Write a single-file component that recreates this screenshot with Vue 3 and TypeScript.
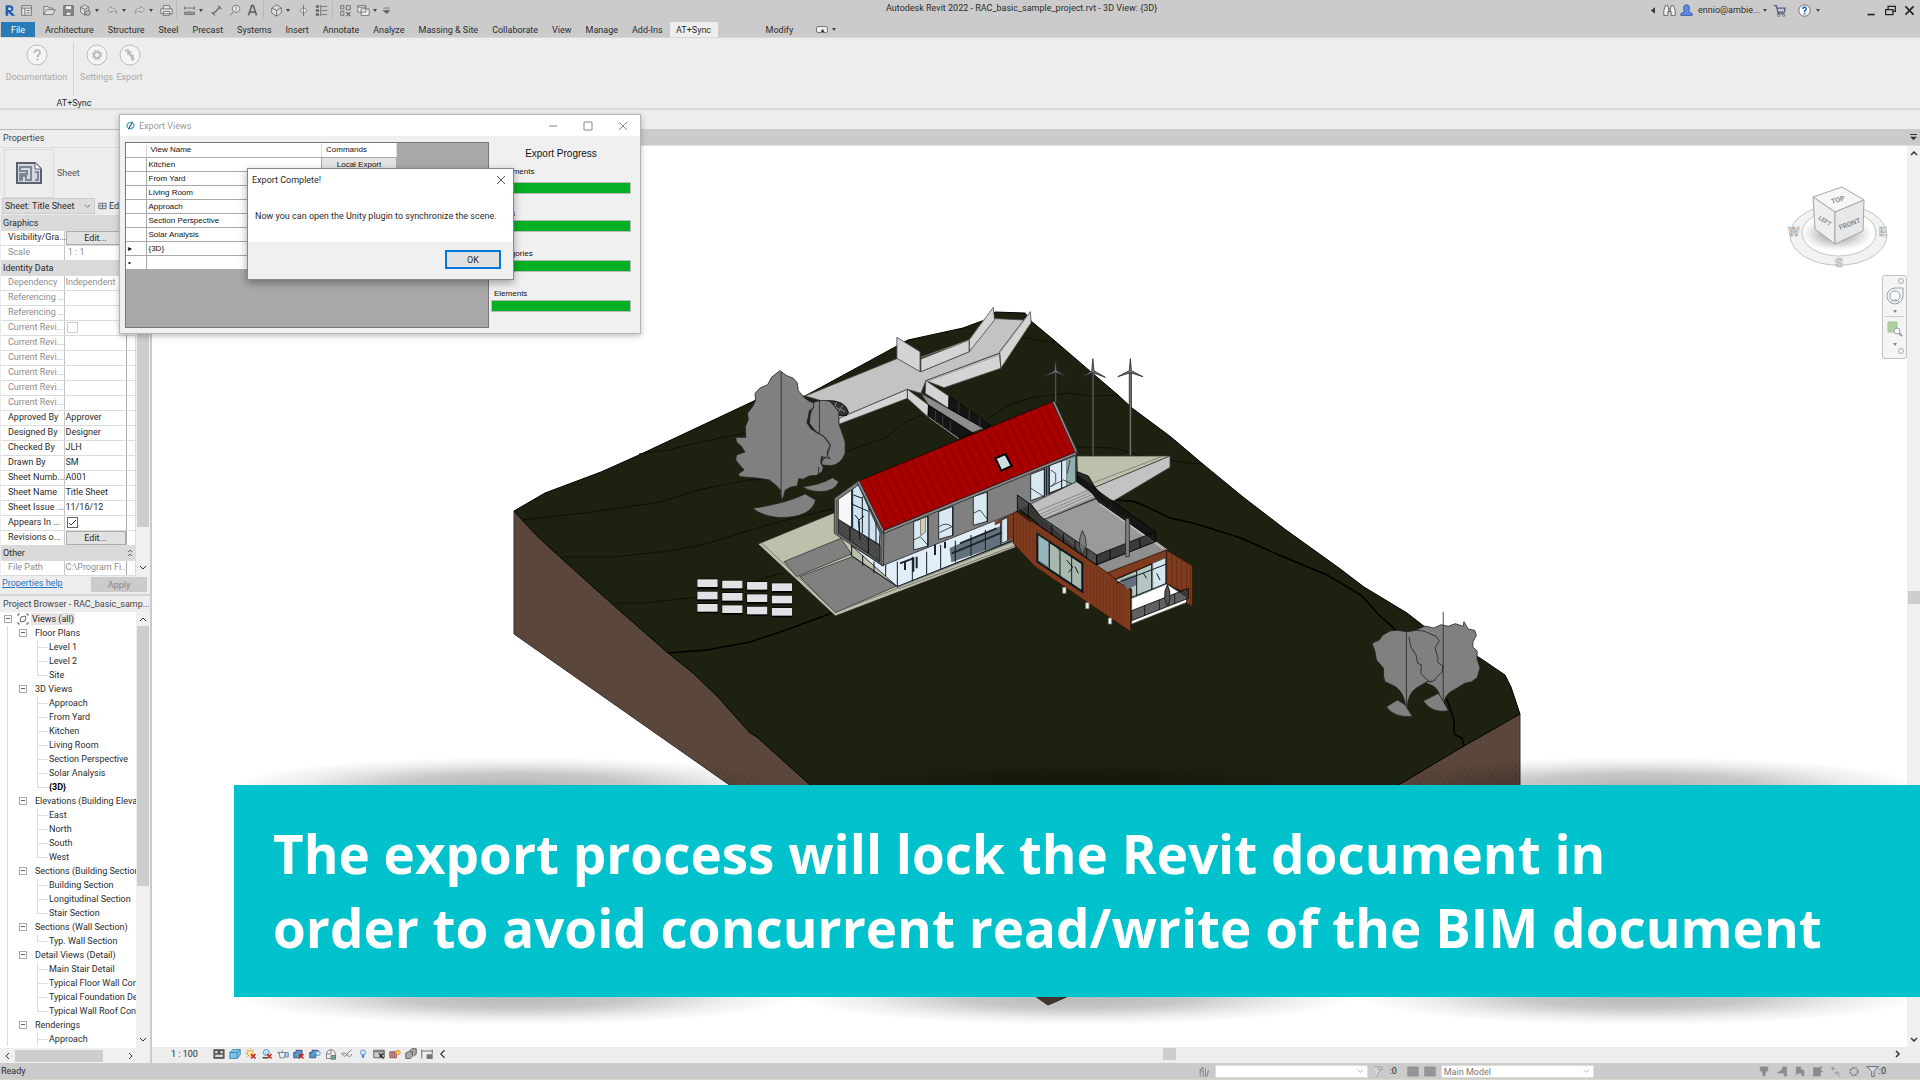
<script setup lang="ts">
import { ref } from 'vue'

interface Tool { icon: string; menu?: boolean; sep?: boolean; w?: number }
interface Prop { kind: 'head' | 'row'; name: string; value?: string; type?: 'edit' | 'check' | 'text'; on?: boolean; dim?: boolean }
interface Node { level: number; name: string; last?: boolean; bold?: boolean }

const icons: Record<string, string> = {
  logo: '<path d="M3 2v12h3v-4l4 4h4l-5-5c4 0 4-7-1-7z" fill="#1f5fae"/><path d="M6 4.500h2c2 0 2 3 0 3H6z" fill="#cbe0f5"/>',
  home: '<path d="M2 2h12v12H2zM2 5h12M6 5v9M8 8h4M8 11h4" fill="#e2e2e2"/>',
  open: '<path d="M1 13V3h5l1 2h5v2M1 13l3-6h11l-3 6z" fill="#dedede"/>',
  save: '<path d="M2 2h12v12H2z" fill="#8a8a8a"/><path d="M4 2h8v5H4zM5 10h6v4H5z" fill="#eee"/>',
  sync: '<path d="M7 1l5 3v6l-5 4-5-4V4zM2 4l5 3 5-3M7 7v7" fill="#ddd"/><circle cx="11" cy="11" r="3" fill="#bbb"/>',
  undo: '<path d="M6 3L2 7l4 4V9c4-1 6 0 7 3 1-5-2-7-7-7z" fill="#d8d8d8" stroke="#8a8a8a"/>',
  redo: '<path d="M10 3l4 4-4 4V9c-4-1-6 0-7 3-1-5 2-7 7-7z" fill="#d8d8d8" stroke="#8a8a8a"/>',
  print: '<path d="M4 6V2h8v4M1 6h14v6H1zM4 9h8v5H4z" fill="#e6e6e6"/>',
  dims: '<path d="M2 5h12M2 3v4M14 3v4M2 10h12v3H2z" fill="#999"/>',
  line: '<path d="M4 12l8-8M2 10l4 4M10 2l4 4" stroke-width="1.500"/>',
  tag: '<circle cx="10" cy="6" r="4.500" fill="#eee"/><path d="M10 3v6M3 14l4-5"/>',
  text: '<path d="M3 14L7 2h2l4 12M5 10h6" stroke-width="2"/>',
  cube: '<path d="M8 1l6 4v6l-6 4-6-4V5zM2 5l6 3 6-3M8 8v7" fill="#ddd"/>',
  section: '<path d="M8 1v14M4 8l4-4 4 4-4 4z" fill="#eee"/>',
  list: '<path d="M1 3h4M1 8h4M1 13h4" stroke-width="3"/><path d="M8 3h7M8 8h7M8 13h7M7 1v14"/>',
  closeviews: '<path d="M2 2h4v4H2zM9 2h5v5H9zM2 9h4v5H2z"/><path d="M9 10l5 5M14 10l-5 5" stroke-width="1.500"/>',
  switchviews: '<path d="M1 2h10v8H1zM5 6h10v8H5zM1 4h10" fill="#eee"/>',
  custom: '<path d="M4 5h8M4 8h8l-4 4z" fill="#666"/>',
  back: '<path d="M11 4v8L6 8z" fill="#333" stroke="none"/>',
  binoc: '<path d="M1 14V8l2-6h3l1 4h2l1-4h3l2 6v6h-5V9H6v5zM7 6v4M9 6v4" fill="#eee" stroke="#555"/>',
  user: '<path d="M8 1c5 0 4 7 2 8l5 3v2H1v-2l5-3C4 8 3 1 8 1z" fill="#5b88e8" stroke="#2d4f9c"/>',
  cart: '<path d="M1 2h3l2 8h8l1-5H5M6 10v2h8" fill="none" stroke="#4d5b86" stroke-width="1.500"/><circle cx="7" cy="14" r="1.500"/><circle cx="13" cy="14" r="1.500"/>',
  help: '<circle cx="8" cy="8" r="7" fill="#fff" stroke="#555"/><path d="M6 6c0-3 4-3 4 0 0 2-2 1-2 4M8 11v2" stroke="#2a62c8" stroke-width="2" fill="none"/>',
  min: '<path d="M3 13h9" stroke="#222" stroke-width="2"/>',
  restore: '<path d="M5 6V3h9v6h-3M2 7h9v6H2z" fill="none" stroke="#222" stroke-width="1.500"/>',
  close: '<path d="M3 3l10 10M13 3L3 13" stroke="#222" stroke-width="2"/>',
  detail: '<path d="M1 2h14v12H1z" fill="#555"/><path d="M3 4h3v3H3zM10 4h3v3h-3zM3 9h10v3H3z" fill="#ddd" stroke="none"/>',
  style: '<path d="M1 6l4-4h10v7l-4 5H1zM1 6h10v8M11 6l4-4" fill="#7cc3e6" stroke="#2a7ba8"/>',
  sun: '<circle cx="7" cy="7" r="4" fill="#ffe9a8" stroke="#d59a1a"/><path d="M7 0v2M0 7h2M2 2l2 2M12 2l-2 2M2 12l2-2" stroke="#d59a1a"/><path d="M8 8l6 6M14 8l-6 6" stroke="#c7221f" stroke-width="2"/>',
  shadow: '<circle cx="7" cy="6" r="4" fill="#bfe0f5" stroke="#3b82ad"/><path d="M2 13h6" stroke="#444" stroke-width="2"/><path d="M8 8l6 6M14 8l-6 6" stroke="#c7221f" stroke-width="2"/>',
  render: '<path d="M3 6h8l-1 7H4zM3 8C0 6 1 4 3 6M7 3v3" fill="#eee"/><path d="M11 6h4v6h-4z" fill="#a8d2f2" stroke="#3b82c8"/>',
  crop: '<path d="M1 12V6h3V3h8v6h-3v4H1z" fill="#5a9ac8" stroke="#336"/><path d="M8 8l6 6M14 8l-6 6" stroke="#c7221f" stroke-width="2"/>',
  cropshow: '<path d="M1 12V6h3V3h8v6h-3v4H1z" fill="#5a9ac8" stroke="#336"/><circle cx="12" cy="7" r="3" fill="#d5ecff" stroke="#3b82c8"/>',
  lock: '<path d="M2 9c0-9 12-9 12 0v5H2zM2 8h6V2" fill="#eee"/><path d="M8 10h6v5H8z" fill="#6fa59a"/>',
  glasses: '<path d="M1 7c2 5 6 5 7 1l6-6M8 8c1 5 6 4 6 0M1 7h6"/>',
  bulb: '<circle cx="8" cy="6" r="3.500" fill="#cfe8ff" stroke="#3b82c8"/><path d="M8 9v4" stroke="#3b82c8" stroke-width="3"/>',
  temp: '<path d="M1 3h14v10H1zM1 5h14" stroke="#444" fill="#ccc"/><path d="M8 7l6 7M9 12l5-5" stroke="#333" stroke-width="2"/>',
  analysis: '<path d="M1 13V5h9v8zM4 5v8M7 5v8" fill="#c99" stroke="#844"/><circle cx="12" cy="6" r="3" fill="#ffcf66" stroke="#d58a1a"/>',
  displace: '<path d="M1 7l3-2h6v6l-3 3H1zM6 4l3-3h6v7l-3 3" fill="#aaa" stroke="#444"/>',
  reveal: '<path d="M1 2v12M15 2v6M1 4h14" stroke="#444"/><path d="M8 9h7v5H8z" fill="#777"/>',
  chev: '<path d="M10 3L5 8l5 5" stroke="#333" stroke-width="1.500" fill="none"/>',
  worker: '<path d="M3 15V7h4v8M5 2v3M10 4v11M14 6l-2 9M2 6l6-3" stroke-width="1.500"/>',
  clip: '<path d="M2 2h9l2 3-5 3-3 7M5 5h6" fill="#ddd"/>',
  block: '<path d="M1 2h14v12H1z" fill="#969696"/>',
  blockcut: '<path d="M1 2h14v12h-5L6 9l4 5H1z" fill="#969696"/>',
  sel1: '<path d="M3 2h10v5l-3 1-1 6H7L6 8 3 7z" fill="#8b8b8b"/>',
  sel2: '<path d="M9 2h5v12h-3v-4H2l7-5z" fill="#8b8b8b"/>',
  sel3: '<path d="M3 2h6v4h4v8h-2l-1-4H6l-3 2z" fill="#8b8b8b"/>',
  sel4: '<path d="M2 3h8l3-2-2 5 3 2-3 1v5H2z" fill="#8b8b8b"/>',
  sel5: '<path d="M4 1v6M1 4h6M9 7v6M6 10h7M12 12v3"/>',
  gear: '<circle cx="8" cy="8" r="5" stroke-width="2.500" stroke-dasharray="3 1"/>',
  funnel: '<path d="M1 2h14l-5 6v6H7V8z" fill="#d3dee8" stroke="#555"/>',
}

const quick: Tool[] = [
  { icon: 'home', w: 23 }, { icon: 'open', w: 19 }, { icon: 'save', w: 17 }, { icon: 'sync', menu: true, w: 27 },
  { icon: 'undo', menu: true, w: 27 }, { icon: 'redo', menu: true, w: 27 }, { icon: 'print', w: 17, sep: true },
  { icon: 'dims', menu: true, w: 27 }, { icon: 'line', w: 18 }, { icon: 'tag', w: 18 }, { icon: 'text', w: 18, sep: true },
  { icon: 'cube', menu: true, w: 27 }, { icon: 'section', w: 18 }, { icon: 'list', w: 18, sep: true },
  { icon: 'closeviews', w: 18 }, { icon: 'switchviews', menu: true, w: 23 }, { icon: 'custom', w: 14 },
]
const tabs = ['Architecture', 'Structure', 'Steel', 'Precast', 'Systems', 'Insert', 'Annotate', 'Analyze', 'Massing & Site', 'Collaborate', 'View', 'Manage', 'Add-Ins']
const viewTools = ['detail', 'style', 'sun', 'shadow', 'render', 'crop', 'cropshow', 'lock', 'glasses', 'bulb', 'temp', 'analysis', 'displace', 'reveal', 'chev']
const statusTools = ['sel1', 'sel2', 'sel3', 'sel4', 'sel5', 'gear']

const props: Prop[] = [
  { kind: 'head', name: 'Graphics' },
  { kind: 'row', name: 'Visibility/Gra...', type: 'edit' },
  { kind: 'row', name: 'Scale', value: ' 1 : 1', dim: true },
  { kind: 'head', name: 'Identity Data' },
  { kind: 'row', name: 'Dependency', value: 'Independent', dim: true },
  { kind: 'row', name: 'Referencing ...', dim: true },
  { kind: 'row', name: 'Referencing ...', dim: true },
  { kind: 'row', name: 'Current Revi...', type: 'check', dim: true },
  { kind: 'row', name: 'Current Revi...', dim: true },
  { kind: 'row', name: 'Current Revi...', dim: true },
  { kind: 'row', name: 'Current Revi...', dim: true },
  { kind: 'row', name: 'Current Revi...', dim: true },
  { kind: 'row', name: 'Current Revi...', dim: true },
  { kind: 'row', name: 'Approved By', value: 'Approver' },
  { kind: 'row', name: 'Designed By', value: 'Designer' },
  { kind: 'row', name: 'Checked By', value: 'JLH' },
  { kind: 'row', name: 'Drawn By', value: 'SM' },
  { kind: 'row', name: 'Sheet Numb...', value: 'A001' },
  { kind: 'row', name: 'Sheet Name', value: 'Title Sheet' },
  { kind: 'row', name: 'Sheet Issue ...', value: '11/16/12' },
  { kind: 'row', name: 'Appears In ...', type: 'check', on: true },
  { kind: 'row', name: 'Revisions o...', type: 'edit' },
  { kind: 'head', name: 'Other' },
  { kind: 'row', name: 'File Path', value: 'C:\\Program Fi...', dim: true },
]

const tree: Node[] = [
  { level: 1, name: 'Floor Plans' }, { level: 2, name: 'Level 1' }, { level: 2, name: 'Level 2' }, { level: 2, name: 'Site', last: true },
  { level: 1, name: '3D Views' }, { level: 2, name: 'Approach' }, { level: 2, name: 'From Yard' }, { level: 2, name: 'Kitchen' },
  { level: 2, name: 'Living Room' }, { level: 2, name: 'Section Perspective' }, { level: 2, name: 'Solar Analysis' }, { level: 2, name: '{3D}', last: true, bold: true },
  { level: 1, name: 'Elevations (Building Elevation)' }, { level: 2, name: 'East' }, { level: 2, name: 'North' }, { level: 2, name: 'South' }, { level: 2, name: 'West', last: true },
  { level: 1, name: 'Sections (Building Section)' }, { level: 2, name: 'Building Section' }, { level: 2, name: 'Longitudinal Section' }, { level: 2, name: 'Stair Section', last: true },
  { level: 1, name: 'Sections (Wall Section)' }, { level: 2, name: 'Typ. Wall Section', last: true },
  { level: 1, name: 'Detail Views (Detail)' }, { level: 2, name: 'Main Stair Detail' }, { level: 2, name: 'Typical Floor Wall Connection' },
  { level: 2, name: 'Typical Foundation Detail' }, { level: 2, name: 'Typical Wall Roof Connection', last: true },
  { level: 1, name: 'Renderings' }, { level: 2, name: 'Approach' },
]

const views = ['Kitchen', 'From Yard', 'Living Room', 'Approach', 'Section Perspective', 'Solar Analysis', '{3D}', '']
const steps = ['Documents', 'Views', 'Categories', 'Elements']
const messageOpen = ref(true)

const seams = Array.from({ length: 25 }, (_, i) => {
  const t = (i + 1) / 26
  return `M${178 + 579 * t} ${302 - 237 * t}L${250 + 582 * t} ${452 - 237 * t}`
}).join('')
const cladding = Array.from({ length: 33 }, (_, i) => {
  const x = 650 + i * 10
  return `M${x} ${402 + (x - 650) * 0.68}V${490 + (x - 640) * 0.76}`
}).join('')
const panels = [0, 1, 2, 3].flatMap(c => [0, 1, 2].map(r => ({ x: 468 + c * 59, y: 866 + c * 4 + r * 37 })))
</script>

<template>
  <div class="app">
    <header class="titlebar">
      <svg class="logo" viewBox="0 0 16 16" v-html="icons.logo" />
      <div class="quick">
        <button v-for="t in quick" :key="t.icon" type="button" class="tool" :class="{ sep: t.sep }" :style="{ width: t.w + 'px' }" :aria-label="t.icon">
          <svg class="ic" viewBox="0 0 16 16" v-html="icons[t.icon]" />
          <i v-if="t.menu" class="caret" />
        </button>
      </div>
      <div class="doc-title">Autodesk Revit 2022 - RAC_basic_sample_project.rvt - 3D View: {3D}</div>
      <div class="account">
        <svg class="ic" viewBox="0 0 16 16" v-html="icons.back" />
        <svg class="ic" viewBox="0 0 16 16" v-html="icons.binoc" />
        <svg class="ic" viewBox="0 0 16 16" v-html="icons.user" />
        <span class="mail">ennio@ambie...</span><i class="caret" />
        <svg class="ic cart" viewBox="0 0 16 16" v-html="icons.cart" />
        <svg class="ic" viewBox="0 0 16 16" v-html="icons.help" /><i class="caret" />
      </div>
      <div class="winbtns">
        <button type="button" aria-label="Minimize"><svg class="ic" viewBox="0 0 16 16" v-html="icons.min" /></button>
        <button type="button" aria-label="Restore"><svg class="ic" viewBox="0 0 16 16" v-html="icons.restore" /></button>
        <button type="button" aria-label="Close"><svg class="ic" viewBox="0 0 16 16" v-html="icons.close" /></button>
      </div>
    </header>

    <nav class="tabs">
      <button type="button" class="file">File</button>
      <button v-for="t in tabs" :key="t" type="button" class="tab">{{ t }}</button>
      <button type="button" class="tab active">AT+Sync</button>
      <button type="button" class="tab modify">Modify</button>
      <span class="collapse"><b>▴</b></span><i class="caret" />
    </nav>

    <section class="ribbon">
      <div class="panel">
        <div class="cmds">
          <button type="button" class="cmd doc">
            <svg viewBox="0 0 22 22"><circle cx="11" cy="11" r="10" /><path d="M8.500 9c0-4 5.500-4 5.500-.500 0 2-2.500 2-2.500 4.500M11.500 14.500v2" stroke-width="2" /></svg>
            <span>Documentation</span>
          </button>
          <button type="button" class="cmd">
            <svg viewBox="0 0 22 22"><circle cx="11" cy="11" r="10" /><circle cx="11" cy="11" r="3" stroke-width="2" /><circle cx="11" cy="11" r="4.500" stroke-dasharray="2 1.500" stroke-width="1.500" /></svg>
            <span>Settings</span>
          </button>
          <button type="button" class="cmd">
            <svg viewBox="0 0 22 22"><circle cx="11" cy="11" r="10" /><path d="M6 7l3-1 1 4 5 5M8 9l6 3-1 3M12 7l-2 3M15 16l-3-1" stroke-width="2" /></svg>
            <span>Export</span>
          </button>
        </div>
        <div class="panel-name">AT+Sync</div>
      </div>
    </section>
    <div class="options" />

    <main class="work">
      <aside class="side">
        <section class="properties">
          <h2>Properties</h2>
          <div class="type">
            <span class="thumb">
              <svg viewBox="0 0 26 22"><path d="M1 1h18l6 6v14H1z" fill="#d5d9df" stroke="#5a626e" stroke-width="2" /><path d="M19 1v6h6" fill="#fff" stroke="#5a626e" /><path d="M4 5h11v13H10v-4H6v4H4v-6h7V9H4zM19 10h3v8h-3" fill="none" stroke="#7d8795" stroke-width="2" /></svg>
            </span>
            <span>Sheet</span>
          </div>
          <div class="pick">
            <label class="sel">
              <select aria-label="Sheet type"><option>Sheet: Title Sheet</option></select>
              <svg class="down" viewBox="0 0 8 8"><path d="M1 2l3 3 3-3" /></svg>
            </label>
            <button type="button" class="edit-type"><svg viewBox="0 0 10 8"><path d="M1 1h8v6H1zM5 1v6M1 4h8" fill="#dfe9f2" stroke="#667" /></svg>Edit Type</button>
          </div>
          <div class="grid-wrap">
            <table class="grid">
              <colgroup><col class="ck"><col class="cv"><col></colgroup>
              <tbody>
                <tr v-for="(p, i) in props" :key="i" :class="{ dim: p.dim }">
                  <th v-if="p.kind === 'head'" colspan="3" scope="colgroup">{{ p.name }}<svg class="fold" viewBox="0 0 6 8"><path d="M1 3l2-2 2 2M1 7l2-2 2 2" /></svg></th>
                  <template v-else>
                    <td class="k">{{ p.name }}</td>
                    <td class="v">
                      <button v-if="p.type === 'edit'" type="button" class="edit">Edit...</button>
                      <input v-else-if="p.type === 'check'" type="checkbox" :checked="p.on" :disabled="p.dim" :aria-label="p.name">
                      <template v-else>{{ p.value }}</template>
                    </td>
                    <td class="x" />
                  </template>
                </tr>
              </tbody>
            </table>
            <div class="vbar"><i class="vthumb" /><svg viewBox="0 0 8 8"><path d="M1 2l3 3 3-3" /></svg></div>
          </div>
          <div class="help"><a href="#">Properties help</a><button type="button" disabled>Apply</button></div>
        </section>
        <section class="browser">
          <h2>Project Browser - RAC_basic_samp...</h2>
          <div class="tree-wrap">
            <ul class="tree">
              <li class="l0"><i class="box" /><svg viewBox="0 0 12 12"><path d="M1 3V1h2M9 1h2v2M11 9v2H9M3 11H1V9M3 8l1-4 4-1 1 1-1 4-4 1z" /></svg><span>Views (all)</span></li>
              <li v-for="(n, i) in tree" :key="i" :class="['l' + n.level, { last: n.last, bold: n.bold }]"><i v-if="n.level === 1" class="box" /><span>{{ n.name }}</span></li>
            </ul>
            <div class="vbar tall"><svg viewBox="0 0 8 8"><path d="M1 5l3-3 3 3" /></svg><i class="vthumb" /><svg class="end" viewBox="0 0 8 8"><path d="M1 2l3 3 3-3" /></svg></div>
          </div>
          <div class="hbar"><svg viewBox="0 0 8 8"><path d="M5 1L2 4l3 3" /></svg><i class="hthumb" /><svg class="end" viewBox="0 0 8 8"><path d="M2 1l3 3-3 3" /></svg></div>
        </section>
      </aside>

      <section class="view">
        <div class="viewtabs"><svg viewBox="0 0 8 8"><path d="M0 0h8v1H0zM0 3h8L4 7z" fill="#333" /></svg></div>
        <div class="canvas">
          <svg class="scene" viewBox="152 146 1755 901" preserveAspectRatio="xMinYMin meet">
            <defs>
              <pattern id="soil" width="6" height="8" patternUnits="userSpaceOnUse"><rect width="6" height="8" fill="#5c483b" stroke="none" /><path d="M1 0v5M4 3v5M2 6l3-2" stroke="#554237" /></pattern>
              <pattern id="mesh" width="4" height="4" patternUnits="userSpaceOnUse"><rect width="4" height="4" fill="#222" fill-opacity=".75" stroke="none" /><path d="M0 4l4-4" stroke="#777" /></pattern>
            </defs>
            <path d="M514 511L1048 700 1520 714V800L1048 1005 728 784 514 634z" fill="url(#soil)" stroke="#333" />
            <path d="M514 511L545 493 601 472 639 455 756 400 805 396 908 340 963 328 990 318 995 312 1025 313 1031 321 1055 341 1091 372 1118 395 1132 408 1171 437 1204 465 1243 497 1286 530 1339 568 1364 587 1407 613 1425 627 1480 658 1505 675 1511 687 1520 714 1464 746 1407 780 1048 985 809 784 757 737 750 733 718 697 693 673 668 653 611 603 561 558 536 535z" fill="#1d2210" stroke="#000" />
            <path class="contour" d="M639 454l29-4 34-8 42-9M522 520l62-7 76-11 38-12 50-10 21-1M563 557h51l54-6 34-6 72-22 63-15M614 603h29l55-6M752 582l30-9M845 452l42-15 17-14 17-8M988 419l17-12 25-9 38-5 25 3 25-1M1021 337l34 6M1077 447l37 1 25 7 40 7 23 2" />
            <path class="contour strong" d="M668 653l39-3 43-8 36-12 46-17M1114 500l18 1 11 4 27 13 23 5 48 15 38 17 48 20 34 20 18 20 19 17M1437 685l11 17 6 18v14l8 4 2 8" />

            <g transform="translate(500 290) scale(.42088 .33333)">
              <path d="M725 318L945 205 1000 245 1115 185 1165 85 1245 90 1185 190 1012 272 1000 310 968 298 805 385 785 340z" fill="#c3c3c3" stroke="#444" />
              <g fill="#d4d4d4" stroke="#444">
                <path d="M943 142L998 185V245L943 205zM1000 207L1115 150V185L1000 245zM1115 150L1172 52 1175 90 1115 185zM1012 272L1187 190 1190 235 1055 293zM1187 185L1260 65 1262 98 1190 235zM1012 272L1066 318V355L1010 310zM968 298L1018 345 1016 380 968 325zM805 385L968 298V325L805 403z" />
              </g>
              <path d="M1000 202L1115 150 1172 52M1187 190L1257 72M1012 276L1187 195" fill="none" stroke="#999" />
              <path d="M1000 310L1150 415 1095 440 1018 345z" fill="#8d8d8d" stroke="#333" />
              <path d="M1018 345L1125 430 1090 445 1018 380zM1068 320L1165 405 1150 415 1066 355z" fill="#151515" stroke="#000" />
              <path d="M1035 362v30M1052 377v30M1070 392v30M1090 338v32M1115 360v34M1140 382v32" stroke="#444" fill="none" /><path d="M1018 381l72 65" stroke="#ccc" />
              <path d="M775 332q45-3 53 35l-5 10-35-2z" fill="#333" stroke="#000" /><path d="M785 345l35 20M800 335l-10 30M815 345l-15 30" stroke="#999" />
              <g fill="#808080" stroke="#222" stroke-linejoin="round">
                <path d="M740 340Q765 325 785 335L805 365V400L820 455V490Q810 525 785 527 L765 525 764 515 775 480 760 440 735 400z" />
                <path d="M665 242L680 256 697 265 706 278 709 302 722 322 735 334 745 338 745 352 735 362 732 385 729 398 738 415 752 428 768 438 777 448 785 466 778 482 778 496 785 506 764 500 762 518 768 532 765 545 752 556 735 558 720 568 710 566 706 588 690 592 678 600 672 626H668L666 600 655 585 640 570 610 564 570 560 566 552 580 540 570 526 560 510 562 495 582 486 574 470 562 456 560 442 584 442 583 410 590 388 588 370 600 350 607 332 606 310 618 294 636 284 645 262z" />
                <path d="M600 655Q680 640 725 612L750 630Q740 682 665 683 625 680 600 655zM720 590Q760 585 790 563L805 575Q795 605 760 605 730 603 720 590z" />
                <path d="M668 245V635M759 330v100M757 530v42" />
                <path d="M745 352L732 385 738 415 768 438 785 466 778 496 764 515" fill="none" />
              </g>
              <path d="M613 762L800 665 840 745 945 885 1225 750V772L797 978z" fill="#bdc0ab" stroke="#222" />
              <path d="M675 815L810 745 835 792 705 860zM712 860L837 800 942 888 797 968z" fill="#808080" stroke="#333" />
              <path d="M620 757L797 967 1225 758" fill="none" stroke="#666" />
              <g v-for="(p, i) in panels" :key="i" stroke="none"><rect :x="p.x" :y="p.y" width="50" height="30" fill="#000" /><rect :x="p.x + 1" :y="p.y + 2" width="48" height="23" fill="#e2e2e6" /></g>
            </g>

            <g transform="translate(1000 300) scale(.35714 .33333)">
              <g fill="#777" stroke="#222">
                <path d="M154 215h4v95h-4zM258 215h5v253h-5zM362 215h6v253h-6z" />
                <path d="M156 176l3 36 30 18-33-12-36 12 32-18zM260 176l3 36 32 20-35-14-34 14 31-20zM365 176l3 36 32 18-35-12-35 12 32-18z" />
              </g>
              <g fill="#808080" stroke="#222">
                <path d="M1165 990l25-12 25 6 20-10 20 5 20-8 22 8 2-14 12 22 18 4 5 15-10 20v15l12 12v25l8 25-8 30-15 12-20 5-30 20q-25 10-30 45h-5q-2-40-20-55l-20-10-20-25v-80z" />
                <path d="M1042 1030l20-10 10-15 20-12 20-2 28 4 25-4 22 2 25 12 8 3 10 15-12 20 8 30v15l14 10-2 18-15 15-8 12-20 2-30 20q-20 12-25 55h-4q-4-40-28-60l-30-15-4-15v-25l-20-25-4-25z" />
                <path d="M1145 1010l5 30 15 25 5 25 10 5-2 25 20 22 10 5" fill="none" />
                <path d="M1082 1220L1113 1200 1135 1215 1155 1250Q1100 1252 1082 1220zM1185 1203L1228 1180 1256 1232Q1210 1242 1185 1203zM1138 955v262M1241 935v265" />
              </g>
            </g>

            <g transform="translate(800 380) scale(.33333)">
              <path d="M830 228H1110L885 322 832 285z" fill="#bdc0ab" stroke="#333" />
              <path d="M1110 228V262L942 362 920 358 885 322z" fill="#c3c3c3" stroke="#444" /><path d="M880 308L1085 230M850 302l30 8" stroke="#777" />
              <path d="M152 495L292 620 645 480V390L245 555z" fill="#e2eef7" stroke="#111" />
              <path d="M450 505L600 440V495L455 545z" fill="#62717d" />
              <path d="M455 520l150-62M480 490l110-45M300 550l40-15v40M315 545v25M350 530v35M405 490v35M435 485v20" stroke="#223" stroke-width="2" fill="none" />
              <path class="mull" d="M155 498v30M188 525v32M222 545v35M257 555v33M292 545v75M337 530v72M380 515v68M422 495v72M466 482v65M513 465v63M556 450v60M602 425v70M152 525L292 620 640 480M640 395v85" />
              <path d="M292 622L648 482 648 496 300 625z" fill="#bdc0ab" />
              <path d="M585 425l55-28v80l-20 8v-65l-35 15z" fill="#7f3b1d" /><path d="M605 420l18-8v70l-18 8z" fill="#d6e4ee" stroke="#111" />
              <path d="M248 455L830 218V305L640 400 245 558z" fill="#808080" stroke="#222" />
              <g fill="#d9e9f2" stroke="#111"><path d="M341 425l44-16v89l-44 12zM416 395l43-16v87l-43 12zM520 350l42-14v88l-42 12z" /><path d="M692 283l42-16v80l-42 15z" /><path d="M747 257l83-30v80l-83 35z" /></g>
              <path d="M362 417l14-5v45l-14 10z" fill="#d8d2b8" /><path d="M800 238l28-10v78l-28 12z" fill="#8fb0ad" />
              <path d="M341 480l20-10 22 25M418 440q20-15 38 0l-38 18M520 400l20-10 22 28M693 325l38 25M750 320l40-20 35 15-30 12M752 270l15 10v25l-12 15M810 240l-8 40" fill="none" stroke="#223" />
              <path class="mull" d="M383 409v92M458 380v88M562 336v90M733 262v88M740 260v86M748 258v86M785 243v84M828 228v80M747 340l82-33" />
              <path d="M103 355L175 303 252 455 250 558 103 460z" fill="#808080" stroke="#222" />
              <path d="M115 358L155 330V445L115 420z" fill="#f8f8f8" stroke="#222" />
              <path d="M155 330L175 314 240 458 238 495 155 445z" fill="#cfe3f0" stroke="#111" />
              <path class="mull" d="M158 328v115M187 350v110M207 375v100M228 425v65M155 372l50 22M160 345l28 10M165 405l12 15 15-12M178 422v40" />
              <path d="M115 418L240 495V545L115 458z" fill="url(#mesh)" stroke="#111" /><path d="M150 440v40M175 420l5 60M205 475v45" stroke="#000" />
              <path d="M110 357v102l135 92V458L178 318" fill="none" stroke="#444" />
              <path d="M178 302L757 65 832 215 250 452z" fill="#a90000" stroke="#200" />
              <path class="thin" :d="seams" stroke="#6a0000" fill="none" />
              <path d="M757 65h8l69 153-6 4z" fill="#8c8c8c" stroke="#222" />
              <path d="M250 452L830 215v8L252 460zM170 304l8-2 74 150-4 8z" fill="#8c8c8c" stroke="#222" />
              <path d="M586 235L616 222 635 258 604 272z" fill="#cfdde2" stroke="#000" stroke-width="2" />
              <path d="M692 372L830 305 892 352 730 420z" fill="#bfbfbf" stroke="#444" />
              <path d="M715 405L870 338M720 412L878 343M728 418L886 349M710 395l155-64" stroke="#777" />
              <path d="M730 420L892 355 1100 510 925 580 885 555z" fill="#9a9a9a" stroke="#333" />
              <path d="M885 553L1067 485 1100 510 925 582z" fill="#8f8f8f" stroke="#555" />
              <path d="M832 275L865 288 890 330 1067 455V485L895 365 870 330 832 305z" fill="#141414" fill-opacity=".88" stroke="#000" />
              <path d="M1067 485l35 25M900 372l190 135" stroke="#eee" fill="none" />
              <path d="M640 400L652 393 922 578 992 630V755L705 560 640 490z" fill="#7f3b1d" stroke="#2b1208" />
              <path class="thin" :d="cladding" stroke="#6c3017" fill="none" />
              <path d="M652 345L695 375 722 410 890 525V555L722 440 695 415 652 385z" fill="url(#mesh)" stroke="#000" />
              <path d="M890 525L1067 455V485L890 555z" fill="#1a1a1a" fill-opacity=".75" stroke="#000" />
              <path d="M652 385v12l42 30M685 370v45M755 435v30M790 460v28M825 482v28M860 508v25M930 510v30M1020 475v30" stroke="#000" fill="none" />
              <path d="M977 418q5-6 11 0v112h-11z" fill="#808080" stroke="#222" />
              <path d="M847 452q12 18 12 45l-8 15v8h-8v-8l-5-15q0-27 9-45z" fill="#777" fill-opacity=".8" stroke="#222" />
              <path d="M712 462L847 550V635L712 545z" fill="#a9b8ad" stroke="#0b1a22" stroke-width="2" /><path d="M715 466l32 20v75l-32-20z" fill="#93b7bb" />
              <path class="mull" d="M748 486v83M780 508v82M815 530v82M712 462V545L847 635V550zM800 540l18 22-12 15M825 560l10 20M770 500l10 12" />
              <path d="M922 578L1100 510V532L945 598z" fill="#7f3b1d" stroke="#2b1208" />
              <path d="M945 600L1100 533V612L995 655V628z" fill="#b5c5c2" stroke="#111" /><path d="M962 600l45-15v30l-25 12z" fill="#62717d" /><path d="M1058 550l40-17v78l-40 18z" fill="#d6e6ee" />
              <path class="mull" d="M1010 572v76M1055 552v80M1098 533v80M950 610L1100 552M995 652l105-42M1030 580l10 15M1070 580l10 20" />
              <path d="M995 655L1100 612 1165 655V665L995 732z" fill="#fff" stroke="#555" />
              <path d="M1100 510L1178 558V680L1160 670V640L1100 612z" fill="#7f3b1d" stroke="#2b1208" /><path class="thin" d="M1115 522v98M1130 532v96M1145 540v96M1160 550v90M1172 556v120" stroke="#61290f" />
              <path d="M995 692L1165 625V655L995 722z" fill="url(#mesh)" stroke="#000" />
              <path d="M1034 678v30M1078 660v30M1124 642v30M1102 615q10 15 8 40l-5 20h-5l-6-20q-2-25 8-40z" fill="#555" stroke="#111" />
              <path d="M788 622h10v18h-10zM857 668h10v18h-10zM925 714h10v18h-10z" fill="#f4f4f4" stroke="#777" />
            </g>
          </svg>
          <svg class="cube" viewBox="0 0 110 90">
            <defs>
              <radialGradient id="cubeShade"><stop offset="0" stop-color="#666" stop-opacity=".9" /><stop offset="1" stop-color="#aaa" stop-opacity="0" /></radialGradient>
            </defs>
            <path d="M7 52a48 30 0 1 0 97 0a48 30 0 1 0-97 0zM19 50a37 23 0 1 0 74 0a37 23 0 1 0-74 0z" fill="#f2f2f2" fill-rule="evenodd" stroke="#c4c4c4" />
            <ellipse cx="54" cy="51" rx="36" ry="17" fill="url(#cubeShade)" stroke="none" />
            <path d="M30 14L59 4 81 17 52 29z" fill="#f6f6f6" stroke="#a5a5a5" />
            <path d="M30 14L52 29V61L32 46z" fill="#eee" stroke="#a5a5a5" />
            <path d="M81 17L52 29V61L80 48z" fill="#e8e8e8" stroke="#a5a5a5" />
            <g fill="#868d94" stroke="none" font-weight="700">
              <text x="49" y="21" font-size="7" transform="rotate(-16 49 21)">TOP</text>
              <text x="35" y="36" font-size="6" transform="rotate(32 35 36)">LEFT</text>
              <text x="57" y="47" font-size="7" transform="rotate(-20 57 47)">FRONT</text>
            </g>
            <g fill="#ececec" stroke="#a8a8a8" stroke-width=".7" font-size="13" font-weight="700"><text x="5" y="53">W</text><text x="96" y="53">E</text><text x="52" y="84">S</text></g>
          </svg>
          <div class="navbar">
            <i class="dot" />
            <svg viewBox="0 0 18 18"><path d="M9 1h8v8a8 8 0 1 1-8-8z" fill="#eef1f5" stroke="#98a2ae" /><circle cx="9" cy="9" r="5" fill="#fff" stroke="#98a2ae" /><path d="M5 15l2-2h4l2 2" stroke="#98a2ae" fill="none" /></svg>
            <i class="caret" /><hr>
            <svg viewBox="0 0 18 18"><path d="M2 2h9v10H2z" fill="#b2cfa4" stroke="#a3c594" /><circle cx="11" cy="11" r="3" fill="#fff" stroke="#99a" /><path d="M13 13l3 3" stroke="#99a" stroke-width="2" /></svg>
            <i class="caret" /><i class="dot" />
          </div>
          <div class="vscroll"><svg viewBox="0 0 8 8"><path d="M1 5l3-3 3 3" /></svg><i /><svg viewBox="0 0 8 8"><path d="M1 2l3 3 3-3" /></svg></div>
        </div>
        <div class="viewbar">
          <span class="scale">1 : 100</span>
          <button v-for="t in viewTools" :key="t" type="button" :aria-label="t"><svg class="ic small" viewBox="0 0 16 16" v-html="icons[t]" /></button>
          <div class="hscroll"><i /><svg viewBox="0 0 8 8"><path d="M2 1l3 3-3 3" /></svg></div>
        </div>
      </section>
    </main>

    <footer class="status">
      <span class="ready">Ready</span>
      <div class="sets">
        <svg class="ic grey" viewBox="0 0 16 16" v-html="icons.worker" />
        <label class="sel"><select aria-label="Workset"><option></option></select><svg class="down" viewBox="0 0 8 8"><path d="M1 2l3 3 3-3" /></svg></label>
        <svg class="ic grey" viewBox="0 0 16 16" v-html="icons.clip" /><span>:0</span>
        <svg class="ic grey gap" viewBox="0 0 16 16" v-html="icons.block" />
        <svg class="ic grey" viewBox="0 0 16 16" v-html="icons.blockcut" />
        <label class="sel"><select aria-label="Design option"><option>Main Model</option></select><svg class="down" viewBox="0 0 8 8"><path d="M1 2l3 3 3-3" /></svg></label>
      </div>
      <div class="filters">
        <svg v-for="t in statusTools" :key="t" class="ic grey" viewBox="0 0 16 16" v-html="icons[t]" />
        <span class="count"><svg class="ic" viewBox="0 0 16 16" v-html="icons.funnel" />:0</span>
      </div>
    </footer>

    <section class="window" role="dialog" aria-label="Export Views">
      <div class="bar">
        <svg class="app-ic" viewBox="0 0 12 12"><path d="M2 9a5 5 0 0 1 6-7M10 3a5 5 0 0 1-6 7" /><path d="M3 11L9 1" stroke="#446" /></svg>
        <span>Export Views</span>
        <button type="button" aria-label="Minimize"><svg viewBox="0 0 8 8"><path d="M0 4h8" /></svg></button>
        <button type="button" aria-label="Maximize"><svg viewBox="0 0 8 8"><path d="M0 0h8v8H0z" /></svg></button>
        <button type="button" aria-label="Close"><svg viewBox="0 0 8 8"><path d="M0 0l8 8M8 0L0 8" /></svg></button>
      </div>
      <div class="body">
        <div class="listing">
          <table>
            <thead><tr><th class="mark" /><th class="name">View Name</th><th class="com">Commands</th></tr></thead>
            <tbody>
              <tr v-for="(v, i) in views" :key="i">
                <td class="mark">{{ i === 6 ? '▸' : i === 7 ? '•' : '' }}</td>
                <td>{{ v }}</td>
                <td class="com"><button v-if="v" type="button">Local Export</button></td>
              </tr>
            </tbody>
          </table>
        </div>
        <div class="progress">
          <h3>Export Progress</h3>
          <label v-for="s in steps" :key="s"><span>{{ s }}</span><progress value="1" max="1" /></label>
        </div>
      </div>
    </section>

    <section v-if="messageOpen" class="message" role="alertdialog" aria-label="Export Complete!">
      <div class="top"><span>Export Complete!</span><button type="button" aria-label="Close" @click="messageOpen = false"><svg viewBox="0 0 8 8"><path d="M0 0l8 8M8 0L0 8" /></svg></button></div>
      <p>Now you can open the Unity plugin to synchronize the scene.</p>
      <div class="actions"><button type="button" @click="messageOpen = false">OK</button></div>
    </section>

    <section class="banner">
      <p>The export process will lock the Revit document in<br>order to avoid concurrent read/write of the BIM document</p>
    </section>
  </div>
</template>

<style>
html, body { margin: 0; background: #cbcbcb; }
</style>

<style scoped>
.app { position: relative; display: flex; flex-direction: column; min-height: 100vh; overflow: hidden; font: 9px/12px Roboto, "Open Sans", sans-serif; color: #2b2b2b; background: #ececec; }
.app * { box-sizing: border-box; }
button { font: inherit; color: inherit; padding: 0; border: 0; background: none; }
h2, h3, p, ul { margin: 0; padding: 0; font: inherit; }
svg { display: block; fill: none; stroke: #666; }
.ic { width: 13px; height: 13px; flex: none; }
.ic.small { width: 12px; height: 12px; }
.ic.grey { width: 12px; stroke: #8b8b8b; }
.caret { width: 0; height: 0; border: 2px solid transparent; border-top: 3px solid #444; border-bottom: 0; flex: none; }

.titlebar { display: flex; align-items: center; height: 22px; background: #cbcbcb; padding: 0 4px 2px 3px; }
.logo { width: 14px; height: 15px; stroke: none; }
.quick { display: flex; align-items: center; width: 480px; padding-left: 3px; }
.tool { display: flex; align-items: center; gap: 3px; height: 18px; }
.tool.sep { border-right: 1px solid #bababa; margin-right: 6px; }
.doc-title { flex: 1; padding: 0 0 4px 389px; white-space: nowrap; }
.account { display: flex; align-items: center; gap: 5px; width: 180px; }
.account .mail { width: 60px; }
.account .ic { margin-left: -1px; }
.account .cart { margin-left: 1px; margin-right: 8px; }
.winbtns { display: flex; gap: 6px; margin-left: 38px; }

.tabs { display: flex; align-items: center; height: 16px; background: #cbcbcb; border-bottom: 1px solid #d8d8d8; }
.file { width: 34px; height: 15px; margin: 0 3px 0 1px; background: #2a7ab5; color: #fff; }
.tab { height: 15px; padding: 1px 7px 0; }
.tab.active { background: #eee; width: 48px; padding: 1px 0 0; }
.tab.modify { margin: 0 16px 0 41px; }
.collapse { width: 12px; height: 7px; border: 1px solid #777; border-radius: 2px; background: #eee; font-size: 6px; line-height: 5px; text-align: center; margin-right: 4px; }

.ribbon { height: 72px; background: #ededed; border-bottom: 2px solid #d9d9d9; }
.panel { width: 148px; padding-top: 4px; }
.cmds { display: flex; height: 54px; color: #ababab; }
.cmd { display: flex; flex-direction: column; align-items: center; gap: 5px; width: 33px; padding-top: 2px; }
.cmd:nth-child(2) { margin-left: 6px; }
.cmd.doc { width: 74px; border-right: 1px solid #d5d5d5; }
.cmd svg { width: 22px; height: 22px; stroke: #bdbdbd; }
.cmd svg circle:first-child { fill: #f5f5f5; stroke-width: 1; }
.panel-name { text-align: center; padding-top: 1px; }
.options { height: 19px; background: #ededed; }

.work { flex: 1; display: flex; min-height: 0; }
.side { width: 152px; flex: none; display: flex; flex-direction: column; background: #ededed; border-top: 1px solid #bbb; border-right: 2px solid #cbcbcb; }
.side h2 { height: 16px; padding-left: 3px; line-height: 16px; white-space: nowrap; color: #444; }
.side .properties h2 { height: 17px; line-height: 17px; }
.type { display: flex; align-items: center; gap: 3px; height: 51px; padding-left: 4px; border-top: 1px solid #ddd; color: #555; }
.thumb { width: 50px; height: 49px; border: 1px solid #dadada; display: grid; place-items: center; }
.thumb svg { width: 26px; height: 22px; }
.sel { position: relative; display: flex; }
.sel select { appearance: none; width: 100%; font: inherit; color: inherit; border: 0; padding: 0 2px; margin: 0; background: transparent; border-radius: 0; }
.down { position: absolute; right: 3px; top: 4px; width: 7px; height: 7px; }
.pick { display: flex; gap: 3px; height: 17px; padding: 0 0 1px 2px; }
.pick .sel { width: 93px; background: #ddd; border: 1px solid #ccc; }
.edit-type { display: flex; align-items: center; gap: 2px; white-space: nowrap; }
.edit-type svg { width: 9px; height: 8px; }
.grid-wrap { display: flex; height: 361px; overflow: hidden; background: #fff; border-left: 1px solid #ededed; }
.grid { width: 135px; flex: none; table-layout: fixed; border-collapse: collapse; height: 360px; }
.grid .ck { width: 63px; }
.grid .cv { width: 62px; }
.grid tr { height: 15px; }
.grid th, .grid td { height: 15px; padding: 0; line-height: 13px; text-align: left; font-weight: 400; white-space: nowrap; overflow: hidden; border: 1px solid #dcdcdc; border-left: 0; border-top: 0; }
.grid th { background: #d9d9d9; padding: 1px 2px 0; line-height: 12px; }
.fold { float: right; width: 6px; height: 8px; margin-top: 2px; }
.grid .k { padding-left: 7px; border-right-color: #c4c4c4; overflow: visible; }
.grid .v { padding-left: 1px; border-right-color: #aaa; white-space: pre; }
.dim { color: #8d8d8d; }
.edit { display: block; width: 60px; height: 14px; background: #e1e1e1; border: 1px solid #aaa; }
.grid input { appearance: none; display: block; margin: 1px; width: 11px; height: 11px; border: 1px solid #666; background: #fff; }
.grid input:disabled { border-color: #ccc; }
.grid input:checked { background: #fff url("data:image/svg+xml,%3Csvg xmlns='http://www.w3.org/2000/svg' viewBox='0 0 9 9'%3E%3Cpath d='M1 5l2 2 5-5' fill='none' stroke='%23333'/%3E%3C/svg%3E"); }
.vbar { position: relative; width: 14px; background: #f0f0f0; display: flex; flex-direction: column; padding: 0 1px; }
.vbar .vthumb { height: 312px; background: #cdcdcd; }
.vbar svg { width: 8px; height: 8px; stroke: #333; margin: auto 2px 4px; }
.help { display: flex; justify-content: space-between; height: 20px; padding: 1px 3px 3px 2px; border-bottom: 2px solid #d5d5d5; }
.help a { color: #1b78c8; }
.help button { width: 56px; height: 15px; background: #cbcbcb; color: #888; }
.browser { flex: 1; display: flex; flex-direction: column; }
.tree-wrap { display: flex; flex: 1; background: #fff; }
.tree { width: 136px; overflow: hidden; list-style: none; }
.tree li { position: relative; display: flex; align-items: center; height: 14px; white-space: nowrap; }
.l0 { padding-left: 4px; gap: 7px; }
.l0 svg { width: 12px; height: 12px; margin-left: -2px; }
.l0 span { background: #e5e5e5; margin-left: -5px; padding: 0 1px; }
.l1 { margin-left: 7px; padding-left: 11px; gap: 8px; border-left: 1px solid #ddd; }
.l2 { margin-left: 7px; padding-left: 41px; border-left: 1px solid #ddd; }
.l2::before { content: ""; position: absolute; left: 29px; top: 0; width: 10px; height: 14px; border-left: 1px solid #ddd; background: linear-gradient(#ddd, #ddd) 0 7px / 10px 1px no-repeat; }
.l2.last::before { height: 8px; }
.box { width: 8px; height: 8px; border: 1px solid #aaa; background: linear-gradient(#567, #567) 1px 2px / 4px 1px no-repeat #fff; flex: none; }
.bold { font-weight: 700; color: #000; }
.tall svg { margin: 4px 2px 2px; }
.tall .vthumb { height: 260px; }
.tall svg.end { margin: auto 2px 4px; }
.hbar { display: flex; align-items: center; height: 15px; background: #f0f0f0; padding-left: 4px; }
.hbar svg { width: 8px; height: 8px; stroke: #333; }
.hthumb { width: 88px; height: 12px; margin-left: 3px; background: #cdcdcd; }
.hbar .end { margin-left: 24px; }

.view { flex: 1; min-width: 0; display: flex; flex-direction: column; }
.viewtabs { display: flex; justify-content: flex-end; align-items: center; height: 17px; background: #cbcbcb; padding-right: 3px; border-bottom: 1px solid #ddd; }
.viewtabs svg { width: 7px; height: 7px; stroke: none; }
.canvas { position: relative; flex: 1; min-height: 0; display: flex; background: #fff; }
.scene { flex: 1; min-width: 0; }
.scene path { vector-effect: non-scaling-stroke; }
.scene g { stroke-width: .8; }
.contour { stroke: #0d1006; }
.contour.strong { stroke: #000; stroke-width: 1.500; }
.thin { stroke-width: .7; }
.mull { stroke: #0b1a22; stroke-width: 1; }
.cube { position: absolute; right: 27px; top: 37px; width: 110px; height: 90px; }
.navbar { position: absolute; right: 13px; top: 129px; width: 25px; height: 84px; display: flex; flex-direction: column; align-items: center; border: 1px solid #c2c2c2; border-radius: 3px; background: #f4f4f4; }
.navbar svg { width: 18px; height: 18px; margin-top: 3px; }
.navbar hr { width: 19px; margin: 3px 0 0; border: 0; border-top: 1px solid #ccc; }
.navbar .caret { margin-top: 5px; border-top-color: #888; }
.navbar .dot { width: 6px; height: 6px; border: 1px solid #aaa; border-radius: 3px; align-self: flex-end; margin: 2px 2px 0; }
.vscroll { width: 13px; background: #f0f0f0; display: flex; flex-direction: column; align-items: center; justify-content: space-between; padding: 4px 0 3px; }
.vscroll svg { width: 8px; height: 8px; stroke: #333; stroke-width: 1.500; }
.vscroll i { width: 12px; height: 13px; background: #cdcdcd; }
.viewbar { display: flex; align-items: center; height: 16px; padding: 0 18px 2px 19px; background: #ededed; }
.scale { width: 42px; }
.viewbar button { width: 16px; height: 13px; }
.hscroll { flex: 1; display: flex; align-items: center; justify-content: flex-end; margin-left: 20px; }
.hscroll i { width: 13px; height: 12px; background: #cdcdcd; margin-right: 718px; }
.hscroll svg { width: 8px; height: 8px; stroke: #333; stroke-width: 1.500; }

.status { display: flex; align-items: center; height: 18px; background: #cbcbcb; border-bottom: 2px solid #d8d8c8; padding-right: 34px; }
.ready { padding-left: 1px; flex: 1; }
.sets, .filters { display: flex; align-items: center; gap: 5px; }
.sets .sel { width: 153px; height: 13px; background: #fff; border: 1px solid #ddd; color: #777; }
.sets .down { top: 2px; stroke: #aaa; }
.sets .gap { margin-left: 5px; }
.filters { gap: 6px; margin-left: 164px; }
.filters .count { display: flex; align-items: center; }

.window { position: absolute; left: 119px; top: 114px; width: 522px; height: 220px; display: flex; flex-direction: column; background: #f0f0f0; border: 1px solid #b5b5b5; box-shadow: 0 2px 6px rgba(0, 0, 0, .25); }
.bar { display: flex; align-items: center; height: 22px; padding-left: 6px; background: #fff; color: #999; }
.app-ic { width: 9px; height: 9px; stroke: #13a8b5; stroke-width: 1.500; margin-right: 4px; }
.bar span { flex: 1; }
.bar button { width: 35px; height: 20px; display: grid; place-items: center; }
.bar button svg, .top button svg { width: 8px; height: 8px; stroke: #888; overflow: visible; }
.body { flex: 1; display: flex; padding: 6px 9px 5px 5px; gap: 2px; font: 8px/12px "Liberation Sans", Arial, sans-serif; color: #111; }
.listing { width: 364px; height: 186px; border: 1px solid #777; background: #a9a9a9; }
.listing table { width: 271px; table-layout: fixed; border-collapse: collapse; background: #fff; }
.listing tr { height: 14px; }
.listing th, .listing td { height: 14px; padding: 1px 0 0 2px; border: 1px solid #a8a8a8; border-top: 0; border-left: 0; line-height: 12px; text-align: left; font-weight: 400; }
.listing th { border-right-color: #ddd; padding-left: 4px; }
.listing .mark { width: 20px; }
.listing .com { width: 75px; }
.listing td.com { padding: 0; }
.listing button { display: block; width: 100%; height: 13px; padding-top: 1px; background: #e4e4e4; }
.progress { flex: 1; display: flex; flex-direction: column; }
.progress h3 { font-size: 10px; line-height: 12px; text-align: center; margin: 6px 0 5px; }
.progress label { display: flex; flex-direction: column; justify-content: flex-end; height: 40px; }
.progress label span { padding-left: 3px; }
.progress label:first-of-type { height: 29px; }
.progress label:nth-of-type(2) { height: 38px; }
.progress label:first-of-type span { margin-bottom: 4px; }
.progress progress { appearance: none; display: block; width: 140px; height: 12px; border: 1px solid #bbb; background: #06b025; }
.progress progress::-webkit-progress-bar { background: #06b025; }
.progress progress::-webkit-progress-value { background: #06b025; }

.message { position: absolute; left: 247px; top: 168px; width: 267px; height: 112px; display: flex; flex-direction: column; background: #fff; border: 1px solid #888; box-shadow: 0 3px 8px rgba(0, 0, 0, .35); }
.top { display: flex; justify-content: space-between; align-items: center; height: 21px; padding: 0 8px 0 4px; }
.top button svg { stroke: #555; }
.message p { flex: 1; padding: 20px 7px 0; white-space: nowrap; }
.actions { display: flex; justify-content: flex-end; height: 37px; padding: 8px 12px; background: #f0f0f0; }
.actions button { width: 56px; height: 19px; border: 1px solid #0078d7; outline: 1px solid #0078d7; outline-offset: -2px; background: #e1e1e1; }

.banner { position: absolute; left: 234px; right: 0; bottom: 84px; isolation: isolate; }
.banner p { position: relative; padding: 32px 39px; background: #00c2cd; color: #fff; font: 700 53px/74px "Open Sans", sans-serif; white-space: nowrap; }
.banner::before, .banner::after { content: ""; position: absolute; z-index: -1; left: 0; right: 0; height: 56px; background: radial-gradient(closest-side, rgba(0, 0, 0, .28), rgba(0, 0, 0, .22) 40%, rgba(0, 0, 0, .07) 75%, transparent) 0 0 / calc(100% / 3) 100% repeat-x; }
.banner::before { top: -28px; }
.banner::after { bottom: -28px; }
</style>
